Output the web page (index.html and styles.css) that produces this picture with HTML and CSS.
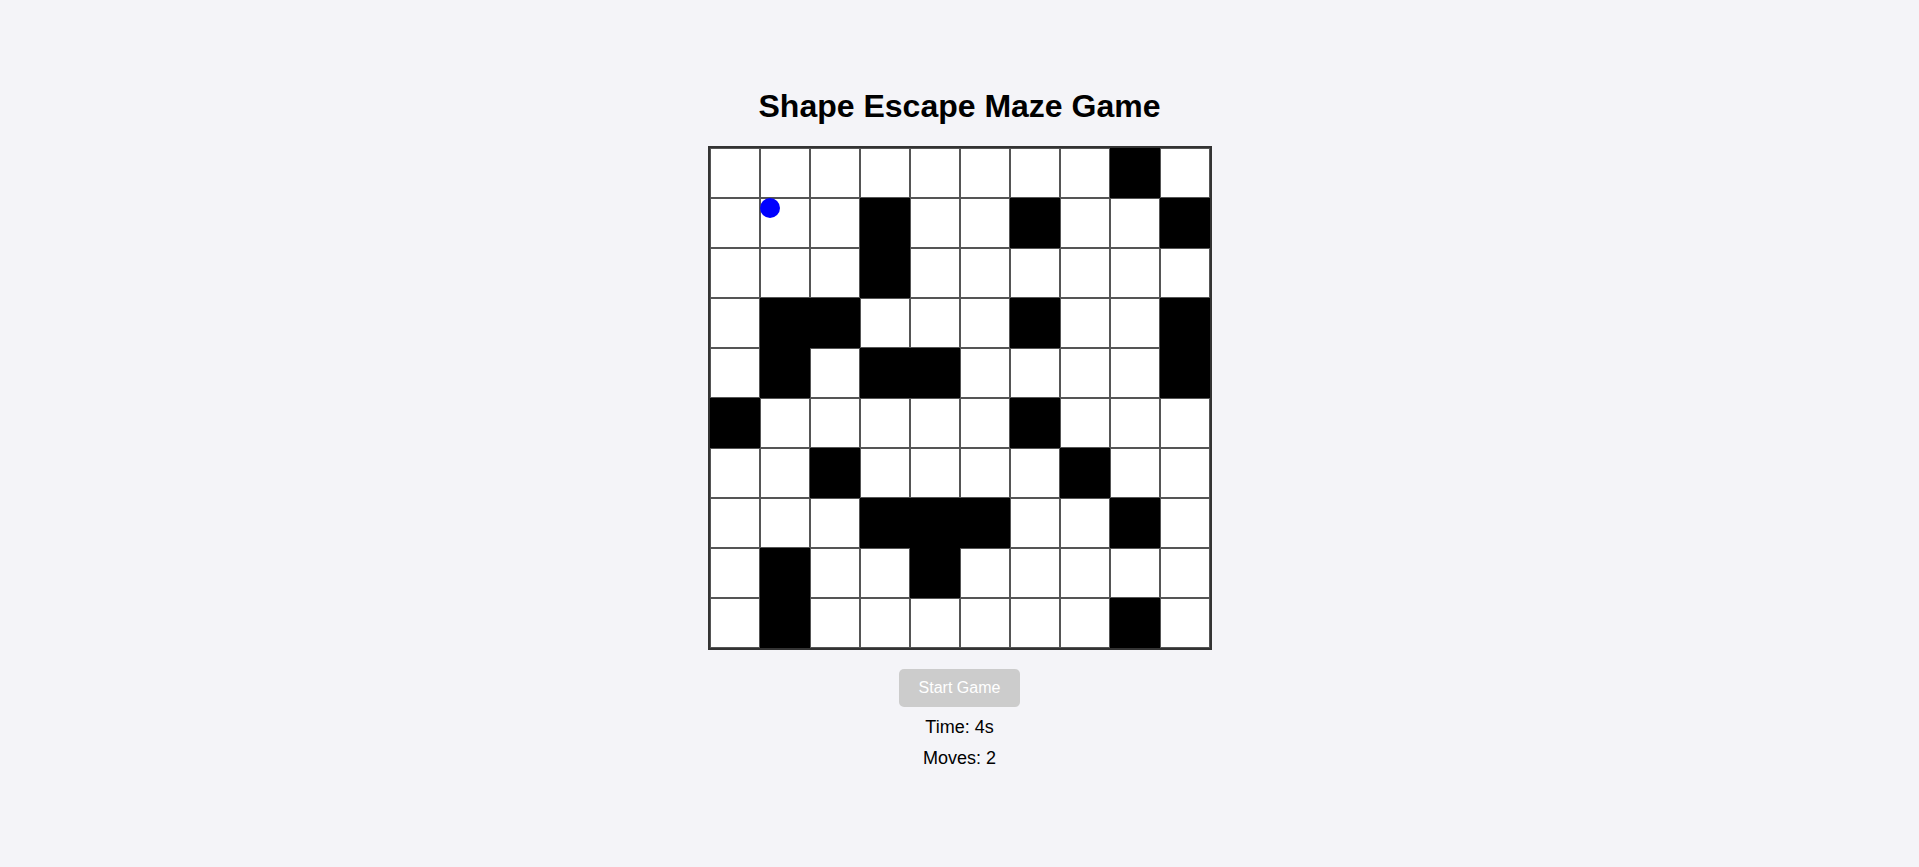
FILE: index.html
```html
<!DOCTYPE html>
<html lang="en">
<head>
<meta charset="UTF-8">
<title>Shape Escape Maze Game</title>
<link rel="stylesheet" href="styles.css">
</head>
<body>
<div class="app">
  <h1 class="title">Shape Escape Maze Game</h1>
  <div class="maze">
    <div class="cell"></div><div class="cell"></div><div class="cell"></div><div class="cell"></div><div class="cell"></div><div class="cell"></div><div class="cell"></div><div class="cell"></div><div class="cell wall"></div><div class="cell"></div>
    <div class="cell"></div><div class="cell"></div><div class="cell"></div><div class="cell wall"></div><div class="cell"></div><div class="cell"></div><div class="cell wall"></div><div class="cell"></div><div class="cell"></div><div class="cell wall"></div>
    <div class="cell"></div><div class="cell"></div><div class="cell"></div><div class="cell wall"></div><div class="cell"></div><div class="cell"></div><div class="cell"></div><div class="cell"></div><div class="cell"></div><div class="cell"></div>
    <div class="cell"></div><div class="cell wall"></div><div class="cell wall"></div><div class="cell"></div><div class="cell"></div><div class="cell"></div><div class="cell wall"></div><div class="cell"></div><div class="cell"></div><div class="cell wall"></div>
    <div class="cell"></div><div class="cell wall"></div><div class="cell"></div><div class="cell wall"></div><div class="cell wall"></div><div class="cell"></div><div class="cell"></div><div class="cell"></div><div class="cell"></div><div class="cell wall"></div>
    <div class="cell wall"></div><div class="cell"></div><div class="cell"></div><div class="cell"></div><div class="cell"></div><div class="cell"></div><div class="cell wall"></div><div class="cell"></div><div class="cell"></div><div class="cell"></div>
    <div class="cell"></div><div class="cell"></div><div class="cell wall"></div><div class="cell"></div><div class="cell"></div><div class="cell"></div><div class="cell"></div><div class="cell wall"></div><div class="cell"></div><div class="cell"></div>
    <div class="cell"></div><div class="cell"></div><div class="cell"></div><div class="cell wall"></div><div class="cell wall"></div><div class="cell wall"></div><div class="cell"></div><div class="cell"></div><div class="cell wall"></div><div class="cell"></div>
    <div class="cell"></div><div class="cell wall"></div><div class="cell"></div><div class="cell"></div><div class="cell wall"></div><div class="cell"></div><div class="cell"></div><div class="cell"></div><div class="cell"></div><div class="cell"></div>
    <div class="cell"></div><div class="cell wall"></div><div class="cell"></div><div class="cell"></div><div class="cell"></div><div class="cell"></div><div class="cell"></div><div class="cell"></div><div class="cell wall"></div><div class="cell"></div>
    <div class="player" style="top: 50px; left: 50px;"></div>
  </div>
  <button class="start-btn" disabled>Start Game</button>
  <div class="info time">Time: 4s</div>
  <div class="info moves">Moves: 2</div>
</div>
</body>
</html>
```

FILE: styles.css
```css
html, body {
  margin: 0;
  padding: 0;
}

body {
  background: #f4f4f8;
  font-family: "Liberation Sans", Arial, sans-serif;
  color: #000;
}

.app {
  display: flex;
  flex-direction: column;
  align-items: center;
  padding-top: 67px;
}

.title {
  font-size: 32px;
  font-weight: bold;
  margin: 21px 0 21px;
  line-height: 37px;
}

.maze {
  position: relative;
  display: grid;
  grid-template-columns: repeat(10, 50px);
  grid-template-rows: repeat(10, 50px);
  border: 2px solid #333;
  background: #fff;
}

.cell {
  box-sizing: border-box;
  width: 50px;
  height: 50px;
  border: 1px solid #555;
  background: #fff;
}

.cell.wall {
  background: #000;
  border-color: #000;
}

.player {
  position: absolute;
  width: 20px;
  height: 20px;
  border-radius: 50%;
  background: #0000ff;
}

.start-btn {
  margin-top: 19px;
  height: 38px;
  padding: 0 20px;
  border: none;
  border-radius: 5px;
  background: #ccc;
  color: #fff;
  font-family: "Liberation Sans", Arial, sans-serif;
  font-size: 16px;
}

.info {
  font-size: 18px;
  line-height: 21px;
  margin-top: 10px;
}
```
